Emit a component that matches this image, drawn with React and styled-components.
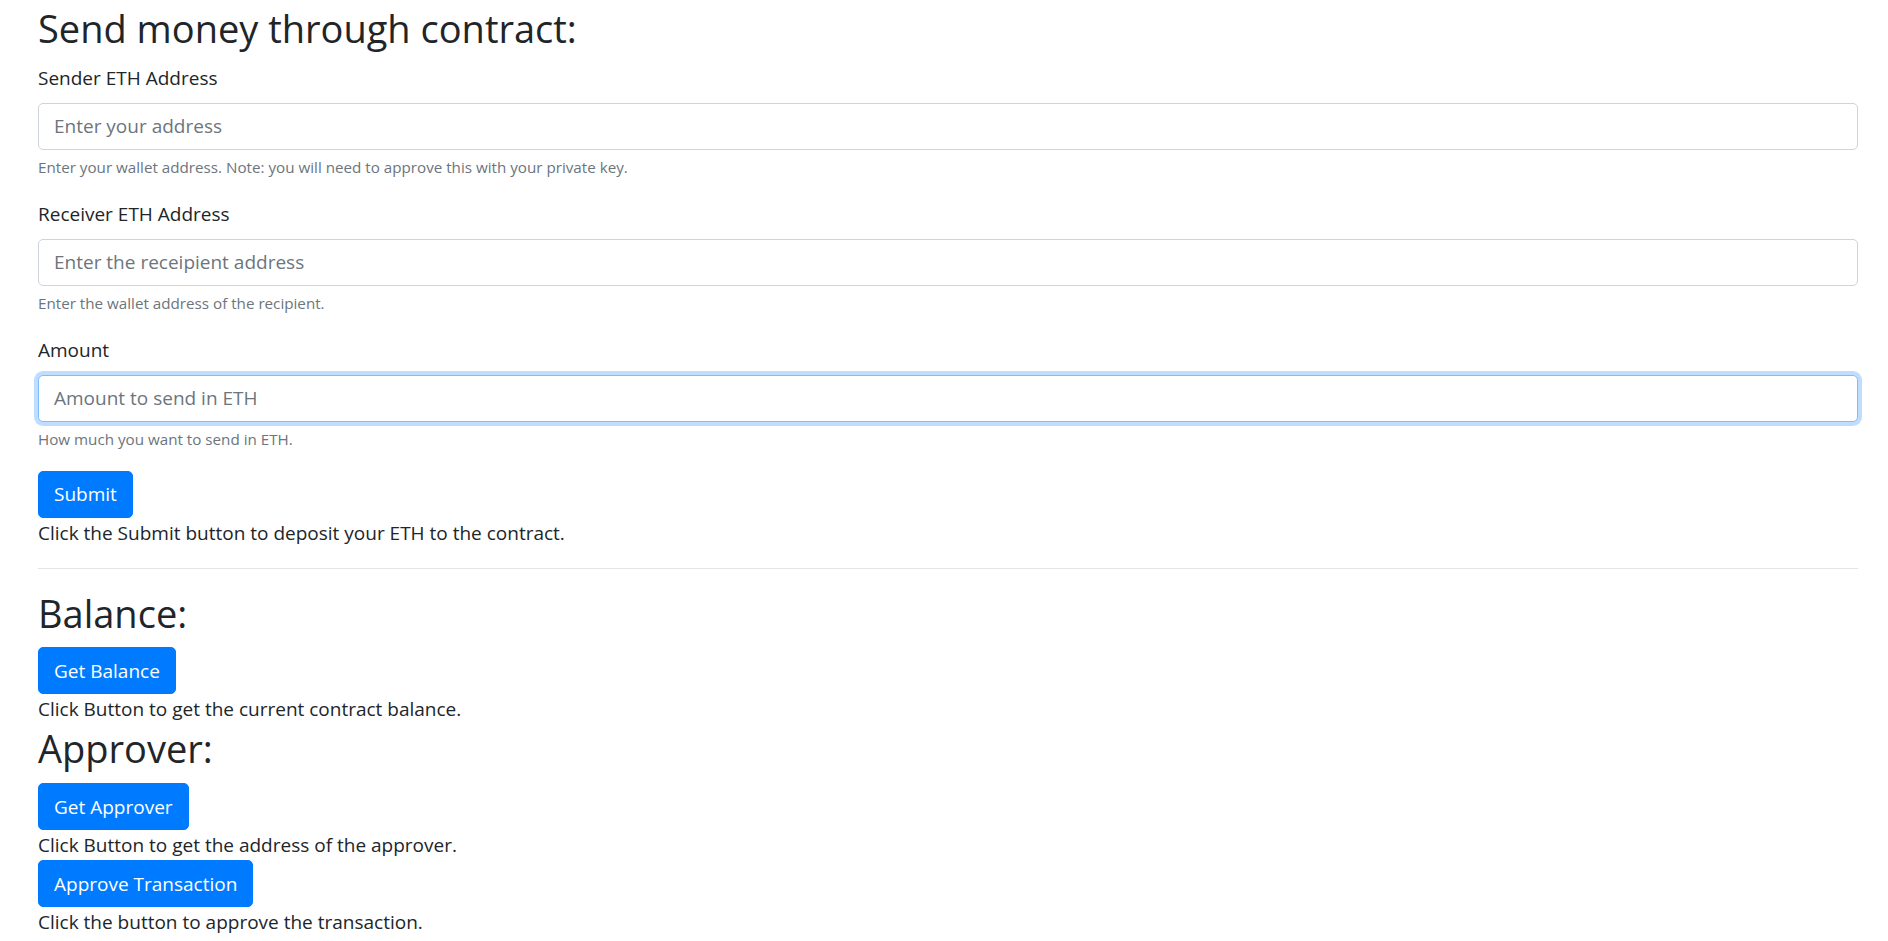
import React from 'react'
import styled, { createGlobalStyle } from 'styled-components'

const GlobalStyle = createGlobalStyle`
  * { box-sizing: border-box; }
  body {
    margin: 0;
    background: #fff;
    color: #212529;
    font-family: "Open Sans", "Segoe UI", Roboto, sans-serif;
    font-size: 19px;
    line-height: 30px;
  }
`

const Page = styled.div`
  padding: 4px 30px 0 38px;
`

const Heading = styled.h2`
  margin: 0 0 10.7px;
  font-size: 38px;
  font-weight: 400;
  line-height: 48px;
`

const FormGroup = styled.div`
  margin-bottom: 20px;
`

const Label = styled.label`
  display: inline-block;
  margin-bottom: 10px;
`

const Input = styled.input`
  display: block;
  width: 100%;
  height: 47px;
  padding: 7.5px 15px;
  font: inherit;
  color: #495057;
  background: #fff;
  border: 1px solid ${p => (p.$focused ? '#80bdff' : '#ced4da')};
  border-radius: 5px;
  box-shadow: ${p => (p.$focused ? '0 0 0 4px rgba(0, 123, 255, 0.25)' : 'none')};
  outline: none;

  &::placeholder {
    color: #6c757d;
  }
`

const Help = styled.small`
  display: block;
  margin-top: 5px;
  font-size: 15.2px;
  line-height: 24px;
  color: #6c757d;
`

const Button = styled.button`
  display: inline-block;
  padding: 7.5px 15px;
  font: inherit;
  line-height: 30px;
  color: #fff;
  background: #007bff;
  border: 1px solid #007bff;
  border-radius: 5px;
  cursor: pointer;
`

const Note = styled.div``

const Rule = styled.hr`
  margin: 20px 0;
  border: 0;
  border-top: 1px solid rgba(0, 0, 0, 0.1);
`

const fields = [
  {
    label: 'Sender ETH Address',
    placeholder: 'Enter your address',
    help: 'Enter your wallet address. Note: you will need to approve this with your private key.'
  },
  {
    label: 'Receiver ETH Address',
    placeholder: 'Enter the receipient address',
    help: 'Enter the wallet address of the recipient.'
  },
  {
    label: 'Amount',
    placeholder: 'Amount to send in ETH',
    help: 'How much you want to send in ETH.',
    focused: true
  }
]

export default function App () {
  return (
    <Page>
      <GlobalStyle />
      <Heading>Send money through contract:</Heading>

      {/* Send form */}
      <form onSubmit={e => e.preventDefault()}>
        {fields.map(f => (
          <FormGroup key={f.label}>
            <Label>{f.label}</Label>
            <Input type='text' placeholder={f.placeholder} $focused={f.focused} />
            <Help>{f.help}</Help>
          </FormGroup>
        ))}
        <Button type='submit'>Submit</Button>
      </form>
      <Note>Click the Submit button to deposit your ETH to the contract.</Note>

      <Rule />

      {/* Balance */}
      <Heading>Balance:</Heading>
      <Button>Get Balance</Button>
      <Note>Click Button to get the current contract balance.</Note>

      {/* Approver */}
      <Heading>Approver:</Heading>
      <Button>Get Approver</Button>
      <Note>Click Button to get the address of the approver.</Note>
      <Button>Approve Transaction</Button>
      <Note>Click the button to approve the transaction.</Note>
    </Page>
  )
}
